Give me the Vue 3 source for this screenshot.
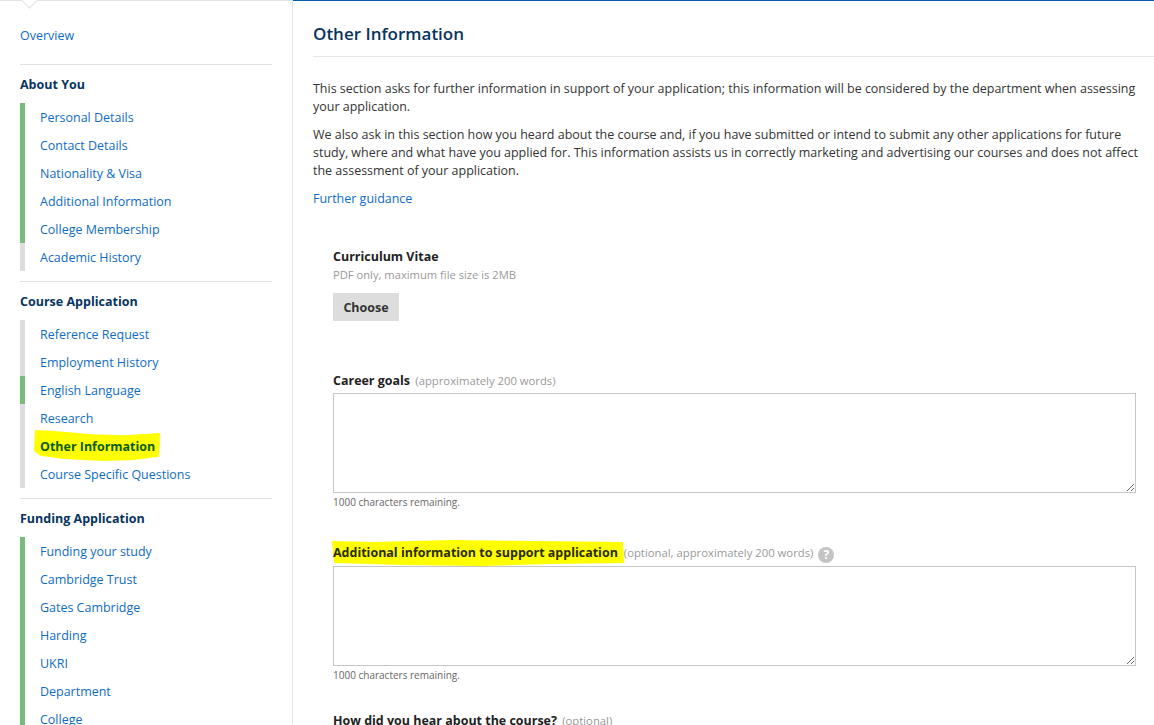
<script setup>
const sections = [
  { title: 'About You', items: [['Personal Details','g'],['Contact Details','g'],['Nationality & Visa','g'],['Additional Information','g'],['College Membership','g'],['Academic History','e']] },
  { title: 'Course Application', items: [['Reference Request','e'],['Employment History','e'],['English Language','g'],['Research','e'],['Other Information','a'],['Course Specific Questions','e']] },
  { title: 'Funding Application', items: [['Funding your study','g'],['Cambridge Trust','g'],['Gates Cambridge','g'],['Harding','g'],['UKRI','g'],['Department','g'],['College','g']] },
]
</script>

<template>
  <div class="page">
    <aside class="side">
      <span class="notch"></span>
      <a class="overview">Overview</a>
      <section v-for="s in sections" :key="s.title" class="sec">
        <h3>{{ s.title }}</h3>
        <ul>
          <li v-for="i in s.items" :key="i[0]" :class="i[1]">
            <a v-if="i[1] !== 'a'">{{ i[0] }}</a>
            <a v-else class="active">
              <svg class="blob blob-nav" viewBox="0 0 126 30" preserveAspectRatio="none"><path d="M1 0 L20 1 L58 4 L90 5 L126 3 L125 26 L100 29 L70 30 L30 28 L6 25 L0 20 Z" fill="#ffff00"/></svg>
              <span class="hl-text">{{ i[0] }}</span>
            </a>
          </li>
        </ul>
      </section>
    </aside>
    <main class="main">
      <h1>Other Information</h1>
      <p class="p1">This section asks for further information in support of your application; this information will be considered by the department when assessing your application.</p>
      <p class="p2">We also ask in this section how you heard about the course and, if you have submitted or intend to submit any other applications for future study, where and what have you applied for. This information assists us in correctly marketing and advertising our courses and does not affect the assessment of your application.</p>
      <a class="guid">Further guidance</a>
      <div class="form">
        <div class="f-cv">
          <label>Curriculum Vitae</label>
          <div class="hint">PDF only, maximum file size is 2MB</div>
          <button>Choose</button>
        </div>
        <div class="f-goal">
          <label>Career goals <span class="opt">(approximately 200 words)</span></label>
          <textarea class="ta"></textarea>
          <div class="rem">1000 characters remaining.</div>
        </div>
        <div class="f-add">
          <label class="add-label">
            <span class="hl">
              <svg class="blob blob-add" viewBox="0 0 292 26" preserveAspectRatio="none"><path d="M0 1 L40 2 L120 0 L200 1 L291 2 L292 23 L220 24 L150 26 L70 25 L2 23 Z" fill="#ffff00"/></svg>
              <span class="hl-text">Additional information to support application</span>
            </span>
            <span class="opt opt-add">(optional, approximately 200 words)</span>
            <i class="q">?</i>
          </label>
          <textarea class="ta"></textarea>
          <div class="rem">1000 characters remaining.</div>
        </div>
        <div class="f-how">
          <label>How did you hear about the course? <span class="opt">(optional)</span></label>
        </div>
      </div>
    </main>
  </div>
</template>

<style>
html, body { margin: 0; height: 100%; overflow: hidden; background: #fff; }
</style>

<style scoped>
.page { display: flex; height: 725px; overflow: hidden; font-family: "Open Sans", sans-serif; font-size: 12.48px; color: #333; }
.side { position: relative; width: 293px; box-sizing: border-box; border-right: 1px solid #e3e3e3; border-top: 1px solid #e3e3e3; padding: 26px 20px 0; flex: none; }
.notch { position: absolute; top: -8px; left: 23px; width: 12px; height: 12px; background: #fff; border-right: 1px solid #e3e3e3; border-bottom: 1px solid #e3e3e3; transform: rotate(45deg); }
a { color: #0f6cc4; }
.overview { display: block; line-height: 18px; margin-bottom: 19px; }
.sec { border-top: 1px solid #e2e2e2; padding-top: 11px; margin-bottom: 10px; width: 252px; }
h3 { margin: 0 0 9px; font-size: 12.5px; line-height: 18px; color: #07345f; font-weight: 700; }
ul { list-style: none; margin: 0; padding: 0; }
li { height: 28px; line-height: 30px; padding-left: 15px; border-left: 5px solid #ddd; }
li.g { border-left-color: #7aba7a; }
.active { position: relative; display: inline-block; font-weight: 700; color: #0a5c10; }
.blob { position: absolute; z-index: 0; display: block; }
.blob-nav { left: -6px; top: -2px; width: 126px; height: 31px; }
.hl-text { position: relative; z-index: 1; }
.main { flex: 1; min-width: 0; border-top: 1px solid #0a5ca8; padding: 0 14px 0 20px; }
h1 { margin: 0 -14px 0 0; height: 56px; line-height: 66px; box-sizing: border-box; font-size: 17px; font-weight: 600; color: #07345f; border-bottom: 1px solid #e5e5e5; }
.p1 { margin: 23px 0 0; line-height: 18px; }
.p2 { margin: 10px 0 0; line-height: 18px; }
.guid { display: block; margin-top: 10px; line-height: 18px; }
.form { padding: 0 4px 0 20px; margin-top: 40px; }
label { display: block; font-weight: 700; line-height: 18px; color: #222; }
.hint { font-size: 11.2px; color: #999; line-height: 18px; }
.opt { font-weight: 400; font-size: 11.3px; color: #999; margin-left: 2px; }
.opt-add { margin-left: 6px; }
button { display: block; margin-top: 9px; width: 66px; height: 28px; border: 0; background: #ddd; font: 700 12.48px "Open Sans", sans-serif; color: #333; padding: 0; }
.f-goal { margin-top: 51px; }
.f-add { margin-top: 35px; }
.f-how { margin-top: 30px; }
.ta { display: block; box-sizing: border-box; width: 100%; height: 100px; border: 1px solid #c6c6c6; margin: 3px 0 0; padding: 0; background: #fff; border-radius: 0; outline: 0; resize: both; }
.rem { font-size: 10px; color: #666; line-height: 14px; margin-top: 2px; }
.hl { position: relative; display: inline-block; color: #2a2a00; }
.blob-add { left: -1px; top: -4px; width: 292px; height: 26px; }
.q { display: inline-block; width: 16px; height: 16px; border-radius: 50%; background: #c4c4c4; color: #fff; font-style: normal; font-size: 12px; font-weight: 700; text-align: center; line-height: 16px; margin-left: 5px; vertical-align: -2px; }
</style>
